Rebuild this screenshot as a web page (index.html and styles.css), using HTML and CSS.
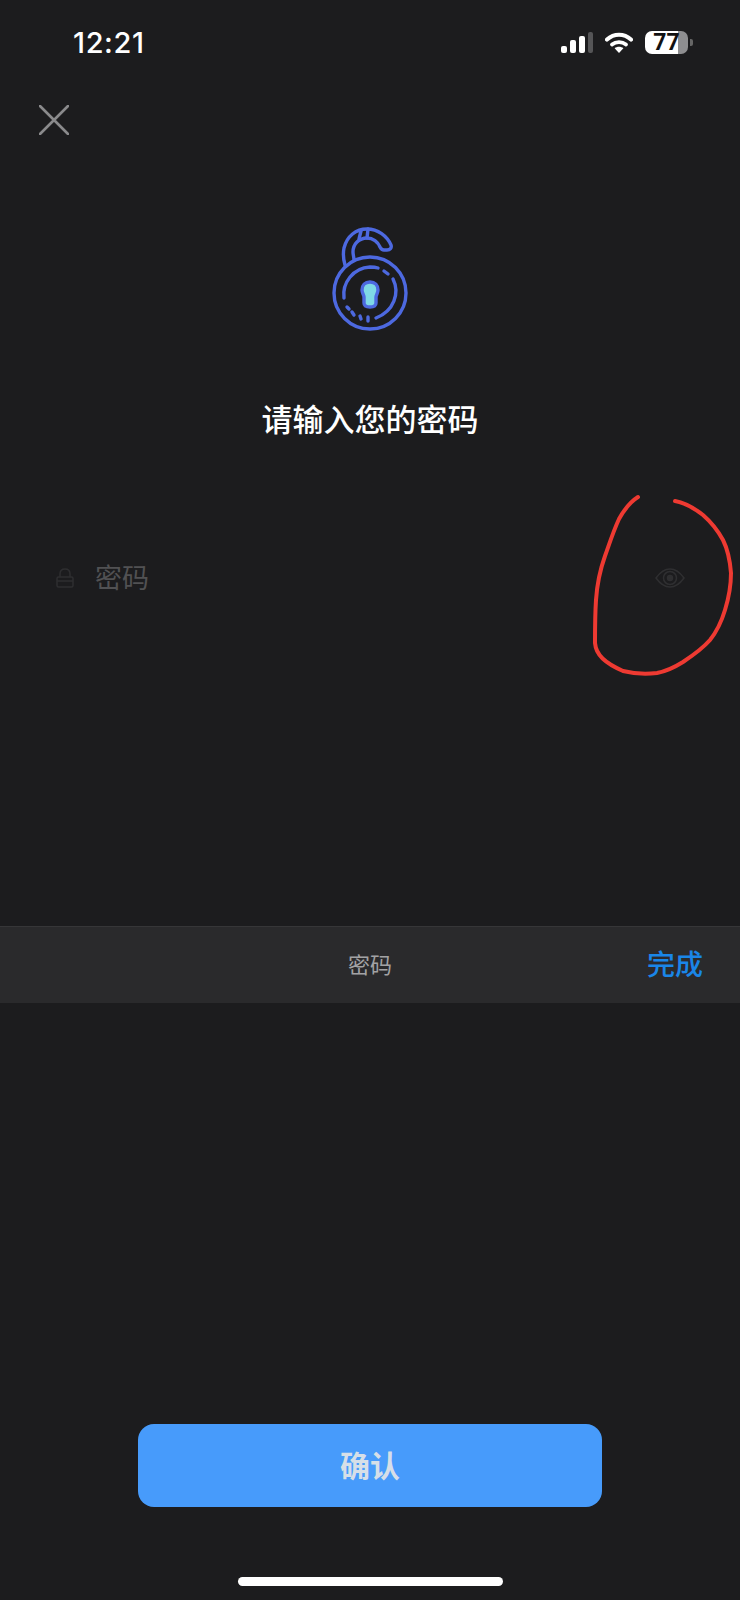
FILE: index.html
```html
<!DOCTYPE html>
<html lang="zh-CN">
<head>
    <meta charset="UTF-8">
    <meta name="viewport" content="width=device-width, initial-scale=1.0">
    <title>请输入您的密码</title>
    <link rel="stylesheet" href="styles.css">
</head>
<body>
    <div class="screen">
        <div class="status-bar">
            <div class="status-time">12:21</div>
            <div class="status-icons">
                <div class="signal">
                    <span class="bar bar-1"></span>
                    <span class="bar bar-2"></span>
                    <span class="bar bar-3"></span>
                    <span class="bar bar-4"></span>
                </div>
                <svg class="wifi" width="28" height="21" viewBox="0 0 28 21">
                    <path d="M2 7.6C9 1.2 19 1.2 26 7.6" fill="none" stroke="#fff" stroke-width="4" stroke-linecap="round"/>
                    <path d="M7 12.6C11 9.4 17 9.4 21 12.6" fill="none" stroke="#fff" stroke-width="3.8" stroke-linecap="round"/>
                    <path d="M9.6 16.2C12 14.2 16 14.2 18.4 16.2L14 21Z" fill="#fff"/>
                </svg>
                <div class="battery">
                    <div class="battery-body">77</div>
                    <span class="battery-tip"></span>
                </div>
            </div>
        </div>

        <div class="close-row">
            <svg width="30" height="30" viewBox="0 0 30 30">
                <path d="M1 1L29 29M29 1L1 29" stroke="#8a8a8c" stroke-width="2.6" stroke-linecap="round"/>
            </svg>
        </div>

        <div class="lock-wrap">
            <svg width="120" height="130" viewBox="0 0 120 130" fill="none" stroke="#4d69e0" stroke-width="3.4" stroke-linecap="round" stroke-linejoin="round">
                <path d="M35 54C33 47 33 42 34 37C37 25 46 18 57 18C68 18 77 25 81 34C82 37 80 39 77 39L74 39C72 39 71 38 70 36C68 31 63 27 57 27C49 27 43 33 43 41C43 44 44 46 44 49"/>
                <path d="M51 20L49 28M58 18L57 27"/>
                <circle cx="60" cy="82" r="36"/>
                <path d="M34 87C32 72 43 57 60 56C63 56 65 56 68 57"/>
                <path d="M74 60L78 63"/>
                <path d="M83 68C90 82 84 100 66 107"/>
                <path d="M37 96L39 98M42 101L44 104M50 105L51 108M58 106L58 110"/>
                <path d="M52 79C52 74 55 71 60 71C65 71 68 74 68 79C68 82 66 84 66 86L66 92C66 95 63 96 60 96C57 96 54 95 54 92L54 86C54 84 52 82 52 79Z" fill="#7fd9e6"/>
            </svg>
        </div>

        <div class="page-title">请输入您的密码</div>

        <div class="password-field">
            <svg class="field-lock" width="18" height="20" viewBox="0 0 18 20" fill="none" stroke="#2e2e30" stroke-width="1.5">
                <path d="M4 9V6C4 3 6 1 9 1C12 1 14 3 14 6V9"/>
                <rect x="1" y="9" width="16" height="10" rx="1.5"/>
                <path d="M1 13H17"/>
            </svg>
            <div class="field-placeholder">密码</div>
            <svg class="field-eye" width="30" height="20" viewBox="0 0 30 20" fill="none" stroke="#2f2f31" stroke-width="1.5">
                <path d="M1 10C6 3 10 1 15 1C20 1 24 3 29 10C24 17 20 19 15 19C10 19 6 17 1 10Z"/>
                <circle cx="15" cy="10" r="6.5"/>
                <circle cx="15" cy="10" r="2.5" fill="#2f2f31"/>
            </svg>
        </div>

        <div class="keyboard-bar">
            <div class="bar-title">密码</div>
            <div class="bar-done">完成</div>
        </div>

        <div class="bottom-area">
            <div class="confirm-btn">确认</div>
            <div class="home-indicator"></div>
        </div>

        <!-- red pen mark drawn on the screenshot -->
        <svg class="pen-mark" width="740" height="1600" viewBox="0 0 740 1600" fill="none">
            <path d="M638 497C630 502 624 510 619 519C613 532 609 545 605 556C600 570 597 585 596 600C595 615 595 630 595 643C596 655 605 663 623 671C635 674 648 674 657 673C668 671 675 667 683 662C695 654 703 648 710 640C718 630 722 620 725 610C729 597 731 585 731 573C730 560 728 550 723 540C717 529 711 522 703 515C694 508 686 503 675 501" stroke="#ee3a32" stroke-width="4" stroke-linecap="round"/>
        </svg>
    </div>
</body>
</html>
```

FILE: styles.css
```css
* {
    margin: 0;
    padding: 0;
    box-sizing: border-box;
}

body {
    background-color: #1c1c1e;
    font-family: 'Noto Sans CJK SC', 'Noto Sans', sans-serif;
    overflow: hidden;
}

.screen {
    position: relative;
    display: flex;
    flex-direction: column;
    width: 740px;
    height: 1600px;
    background-color: #1c1c1e;
    color: white;
}

/* Status bar */
.status-bar {
    display: flex;
    justify-content: space-between;
    align-items: center;
    height: 84px;
    padding: 0 47px 0 73px;
}

.status-time {
    font-family: 'Inter', sans-serif;
    font-size: 29px;
    font-weight: 500;
    letter-spacing: 0.6px;
}

.status-icons {
    display: flex;
    align-items: center;
    gap: 12px;
}

.signal {
    display: flex;
    align-items: flex-end;
    gap: 3px;
    height: 21px;
}

.bar {
    width: 6px;
    background-color: white;
    border-radius: 2px;
}

.bar-1 { height: 7px; }
.bar-2 { height: 13px; }
.bar-3 { height: 17px; }
.bar-4 { height: 21px; width: 5px; background-color: #555557; }

.battery {
    display: flex;
    align-items: center;
    gap: 2px;
}

.battery-body {
    width: 43px;
    height: 23px;
    border-radius: 7px;
    background: linear-gradient(to right, #fff 0, #fff 33px, #8e8e90 33px);
    color: #111;
    font-family: 'Roboto', sans-serif;
    font-size: 23px;
    font-weight: 700;
    line-height: 23px;
    text-align: center;
}

.battery-tip {
    width: 3px;
    height: 7px;
    background-color: #666;
    border-radius: 0 2px 2px 0;
}

/* Close button */
.close-row {
    display: flex;
    padding: 21px 0 0 39px;
}

/* Lock illustration */
.lock-wrap {
    display: flex;
    justify-content: center;
    margin-top: 76px;
}

.page-title {
    margin-top: 53px;
    font-size: 31px;
    font-weight: 500;
    line-height: 48px;
    text-align: center;
}

/* Password input */
.password-field {
    display: flex;
    align-items: center;
    height: 40px;
    margin-top: 115px;
    padding: 0 55px 0 56px;
}

.field-lock {
    margin-top: 2px;
}

.field-eye {
    margin-top: 1px;
}

.field-placeholder {
    flex: 1;
    margin-left: 21px;
    font-size: 27px;
    line-height: 40px;
    color: #515153;
}

/* Keyboard accessory bar */
.keyboard-bar {
    display: grid;
    grid-template-columns: 1fr auto 1fr;
    align-items: center;
    height: 77px;
    margin-top: 329px;
    padding: 0 37px 5px;
    background-color: #2a2a2c;
    border-top: 1px solid #363638;
}

.bar-title {
    grid-column: 2;
    font-size: 22px;
    color: #a2a2a4;
}

.bar-done {
    grid-column: 3;
    justify-self: end;
    font-size: 28px;
    font-weight: 500;
    color: #1a86e8;
}

/* Bottom */
.bottom-area {
    display: flex;
    flex-direction: column;
    align-items: center;
    margin-top: auto;
    padding-bottom: 14px;
}

.confirm-btn {
    display: flex;
    justify-content: center;
    align-items: center;
    width: 464px;
    height: 83px;
    padding-bottom: 4px;
    background-color: #479bfb;
    border-radius: 16px;
    font-size: 30px;
    font-weight: 700;
    color: #d6dfe8;
}

.home-indicator {
    width: 265px;
    height: 9px;
    margin-top: 70px;
    background-color: white;
    border-radius: 5px;
}

/* Annotation over the page */
.pen-mark {
    position: absolute;
    top: 0;
    left: 0;
    pointer-events: none;
}
```
